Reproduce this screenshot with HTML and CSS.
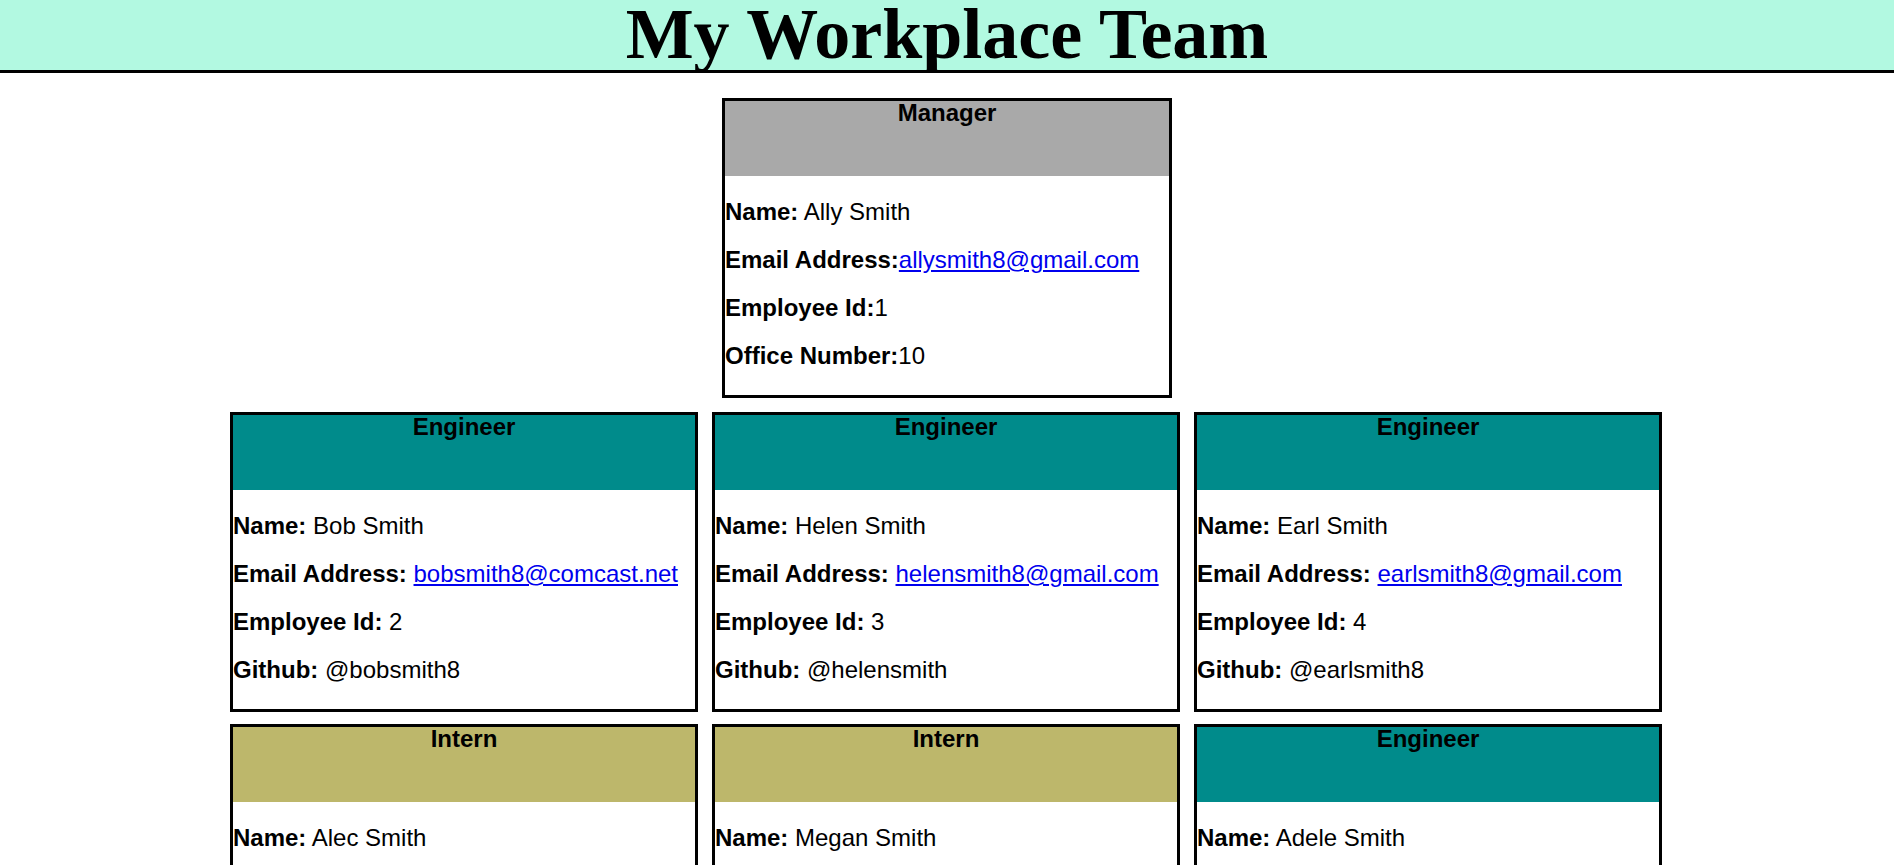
FILE: index.html
```html
<!DOCTYPE html>
<html lang="en">
<head>
<meta charset="UTF-8">
<title>My Workplace Team</title>
<link rel="stylesheet" href="styles.css">
</head>
<body>
<header class="top">
  <h1 class="title">My Workplace Team</h1>
</header>
<main class="team">
  <div class="row">
    <section class="card card-manager">
      <div class="card-head"><h2 class="role">Manager</h2></div>
      <div class="card-body">
        <p><b>Name:</b> Ally Smith</p>
        <p><b>Email Address:</b><a href="mailto:allysmith8@gmail.com">allysmith8@gmail.com</a></p>
        <p><b>Employee Id:</b>1</p>
        <p><b>Office Number:</b>10</p>
      </div>
    </section>
  </div>
  <div class="row row-grid">
    <section class="card">
      <div class="card-head engineer"><h2 class="role">Engineer</h2></div>
      <div class="card-body">
        <p><b>Name:</b> Bob Smith</p>
        <p><b>Email Address:</b> <a href="mailto:bobsmith8@comcast.net">bobsmith8@comcast.net</a></p>
        <p><b>Employee Id:</b> 2</p>
        <p><b>Github:</b> @bobsmith8</p>
      </div>
    </section>
    <section class="card">
      <div class="card-head engineer"><h2 class="role">Engineer</h2></div>
      <div class="card-body">
        <p><b>Name:</b> Helen Smith</p>
        <p><b>Email Address:</b> <a href="mailto:helensmith8@gmail.com">helensmith8@gmail.com</a></p>
        <p><b>Employee Id:</b> 3</p>
        <p><b>Github:</b> @helensmith</p>
      </div>
    </section>
    <section class="card">
      <div class="card-head engineer"><h2 class="role">Engineer</h2></div>
      <div class="card-body">
        <p><b>Name:</b> Earl Smith</p>
        <p><b>Email Address:</b> <a href="mailto:earlsmith8@gmail.com">earlsmith8@gmail.com</a></p>
        <p><b>Employee Id:</b> 4</p>
        <p><b>Github:</b> @earlsmith8</p>
      </div>
    </section>
    <section class="card">
      <div class="card-head intern"><h2 class="role">Intern</h2></div>
      <div class="card-body">
        <p><b>Name:</b> Alec Smith</p>
        <p><b>Email Address:</b> <a href="mailto:alecsmith8@gmail.com">alecsmith8@gmail.com</a></p>
        <p><b>Employee Id:</b> 5</p>
        <p><b>School:</b> UCLA</p>
      </div>
    </section>
    <section class="card">
      <div class="card-head intern"><h2 class="role">Intern</h2></div>
      <div class="card-body">
        <p><b>Name:</b> Megan Smith</p>
        <p><b>Email Address:</b> <a href="mailto:megansmith8@gmail.com">megansmith8@gmail.com</a></p>
        <p><b>Employee Id:</b> 6</p>
        <p><b>School:</b> USC</p>
      </div>
    </section>
    <section class="card">
      <div class="card-head engineer"><h2 class="role">Engineer</h2></div>
      <div class="card-body">
        <p><b>Name:</b> Adele Smith</p>
        <p><b>Email Address:</b> <a href="mailto:adelesmith8@gmail.com">adelesmith8@gmail.com</a></p>
        <p><b>Employee Id:</b> 7</p>
        <p><b>Github:</b> @adelesmith8</p>
      </div>
    </section>
  </div>
</main>
</body>
</html>
```

FILE: styles.css
```css
html, body {
  margin: 0;
  padding: 0;
  background: #ffffff;
}

body {
  font-family: "Liberation Sans", Arial, sans-serif;
  color: #000000;
}

.top {
  background: #b2f9e1;
  border-bottom: 3px solid #000000;
  height: 70px;
  overflow: visible;
}

.title {
  margin: 0;
  font-family: "Liberation Serif", "Times New Roman", serif;
  font-weight: bold;
  font-size: 72px;
  line-height: 68px;
  text-align: center;
}

.team {
  display: flex;
  flex-direction: column;
  align-items: center;
  padding-top: 25px;
  padding-bottom: 40px;
}

.row {
  display: flex;
  justify-content: center;
}

.row-grid {
  display: grid;
  grid-template-columns: repeat(3, 468px);
  column-gap: 14px;
  row-gap: 12px;
  margin-top: 14px;
  margin-right: 2px;
}

.card {
  border: 3px solid #000000;
  width: 462px;
  background: #ffffff;
}

.card-manager {
  width: 444px;
}

.card-head {
  height: 75px;
  background: #a9a9a9;
}

.card-head.engineer {
  background: #008b8b;
}

.card-head.intern {
  background: #bdb76b;
}

.role {
  margin: 0;
  font-size: 24px;
  line-height: 24px;
  font-weight: bold;
  text-align: center;
}

.card-body {
  padding-bottom: 3px;
}

.card-body p {
  margin: 24px 0;
  font-size: 24px;
  line-height: 24px;
}

.card-body a {
  color: #0000ee;
  text-decoration: underline;
}
```
